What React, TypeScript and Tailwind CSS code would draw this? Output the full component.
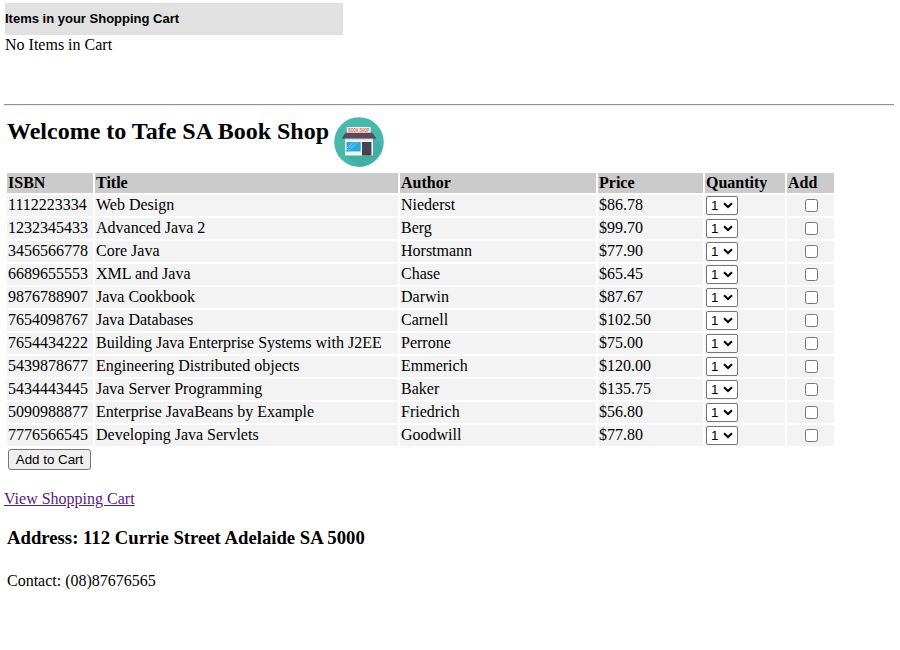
const books = [
  ["1112223334", "Web Design", "Niederst", "$86.78"],
  ["1232345433", "Advanced Java 2", "Berg", "$99.70"],
  ["3456566778", "Core Java", "Horstmann", "$77.90"],
  ["6689655553", "XML and Java", "Chase", "$65.45"],
  ["9876788907", "Java Cookbook", "Darwin", "$87.67"],
  ["7654098767", "Java Databases", "Carnell", "$102.50"],
  ["7654434222", "Building Java Enterprise Systems with J2EE", "Perrone", "$75.00"],
  ["5439878677", "Engineering Distributed objects", "Emmerich", "$120.00"],
  ["5434443445", "Java Server Programming", "Baker", "$135.75"],
  ["5090988877", "Enterprise JavaBeans by Example", "Friedrich", "$56.80"],
  ["7776566545", "Developing Java Servlets", "Goodwill", "$77.80"],
];

const headings = ["ISBN", "Title", "Author", "Price", "Quantity", "Add"];
const columns = "grid grid-cols-[86px_303px_196px_105px_80px_47px] gap-[2px]";

function ShopLogo() {
  return (
    <svg className="ml-[5px] mt-[5px] h-[50px] w-[50px]" viewBox="0 0 50 50">
      <circle cx="25" cy="25" r="24.8" fill="#46b8ac" />
      <path d="M41.5 21 48 31A25 25 0 0 1 24 49.7L12 38Z" fill="#41afa3" />
      <rect x="11" y="20" width="28" height="18.5" fill="#f3f3f3" />
      <rect x="12.7" y="10" width="24" height="7" fill="#f4efee" />
      <text x="24.7" y="15.2" textAnchor="middle" fontSize="5" fontWeight="bold" textLength="21" lengthAdjust="spacingAndGlyphs" fill="#d8685f" fontFamily="Liberation Sans, sans-serif">BOOK SHOP</text>
      <path d="M11.5 15.8H38.5L41.7 20.4V21.8H8.3V20.4Z" fill="#5b4a5c" />
      <rect x="11" y="21.8" width="28" height="1.4" fill="#d8dcdd" />
      <rect x="12.5" y="25" width="14.2" height="9.4" fill="#25a6de" />
      <path d="M12.5 33 22 25H26L15 34.4H12.5Z" fill="#45b4e4" />
      <path d="M13 31 19.5 25.3" stroke="#d9f2fb" strokeWidth="1" strokeDasharray="1.5 1" />
      <rect x="28" y="25" width="9.4" height="13.5" fill="#48424f" />
    </svg>
  );
}

function Quantity() {
  return (
    <div className="relative h-[19px] w-8">
      <select className="block h-[19px] w-8 appearance-none rounded-[2px] border border-[#767676] bg-white pl-1 font-['Liberation_Sans',Arial,sans-serif] text-[13.333px] leading-[17px] text-black">
        <option>1</option>
      </select>
      <svg className="pointer-events-none absolute left-[17px] top-[6px] h-[7px] w-[10px]" viewBox="0 0 10 7">
        <path d="M1 1.2 5 5 9 1.2" fill="none" stroke="#000" strokeWidth="2" />
      </svg>
    </div>
  );
}

export default function App() {
  return (
    <main className="flex h-[650px] w-[900px] flex-col overflow-hidden bg-white font-['Liberation_Serif','Times_New_Roman',serif] text-[16px] leading-[18px] text-black">
      <div className="ml-[5px] mt-[3px] flex h-8 w-[338px] items-center bg-[#e1e1e1] font-['Liberation_Sans',Arial,sans-serif] text-[13px] font-bold">
        Items in your Shopping Cart
      </div>
      <p className="ml-[5px] mt-px">No Items in Cart</p>
      <hr className="ml-1 mt-[50px] h-[2px] w-[890px] border-0 border-t border-[#929292] bg-[#eeeeee]" />

      <header className="ml-[7px] mt-[6px] flex h-[61px] items-start">
        <h1 className="mt-[5px] text-[24px] font-bold leading-[28px]">Welcome to Tafe SA Book Shop</h1>
        <ShopLogo />
      </header>

      <section className="ml-[7px] flex w-[827px] flex-col gap-[2px]">
        <div className={columns}>
          {headings.map((h) => (
            <div key={h} className="h-5 bg-[#cbcbcb] pl-px pt-px font-bold">{h}</div>
          ))}
        </div>
        {books.map((book) => (
          <div key={book[0]} className={columns}>
            {book.map((value) => (
              <div key={value} className="h-[21px] whitespace-nowrap bg-[#f3f3f3] pl-px pt-px">{value}</div>
            ))}
            <div className="h-[21px] bg-[#f3f3f3] pl-px pt-px"><Quantity /></div>
            <div className="h-[21px] bg-[#f3f3f3] pl-[18px] pt-1">
              <input type="checkbox" className="block h-[13px] w-[13px] appearance-none rounded-[2.5px] border border-[#767676] bg-white" />
            </div>
          </div>
        ))}
      </section>

      <button className="ml-2 mt-[3px] h-[21px] w-[83px] rounded-[3px] border border-[#767676] bg-[#efefef] font-['Liberation_Sans',Arial,sans-serif] text-[13.333px] leading-[19px]">
        Add to Cart
      </button>
      <a href="#" className="ml-1 mt-5 self-start text-[#551a8b] underline">View Shopping Cart</a>
      <h2 className="ml-[7px] mt-[19px] text-[18.72px] font-bold leading-[21px]">Address: 112 Currie Street Adelaide SA 5000</h2>
      <p className="ml-[7px] mt-6">Contact: (08)87676565</p>
    </main>
  );
}
